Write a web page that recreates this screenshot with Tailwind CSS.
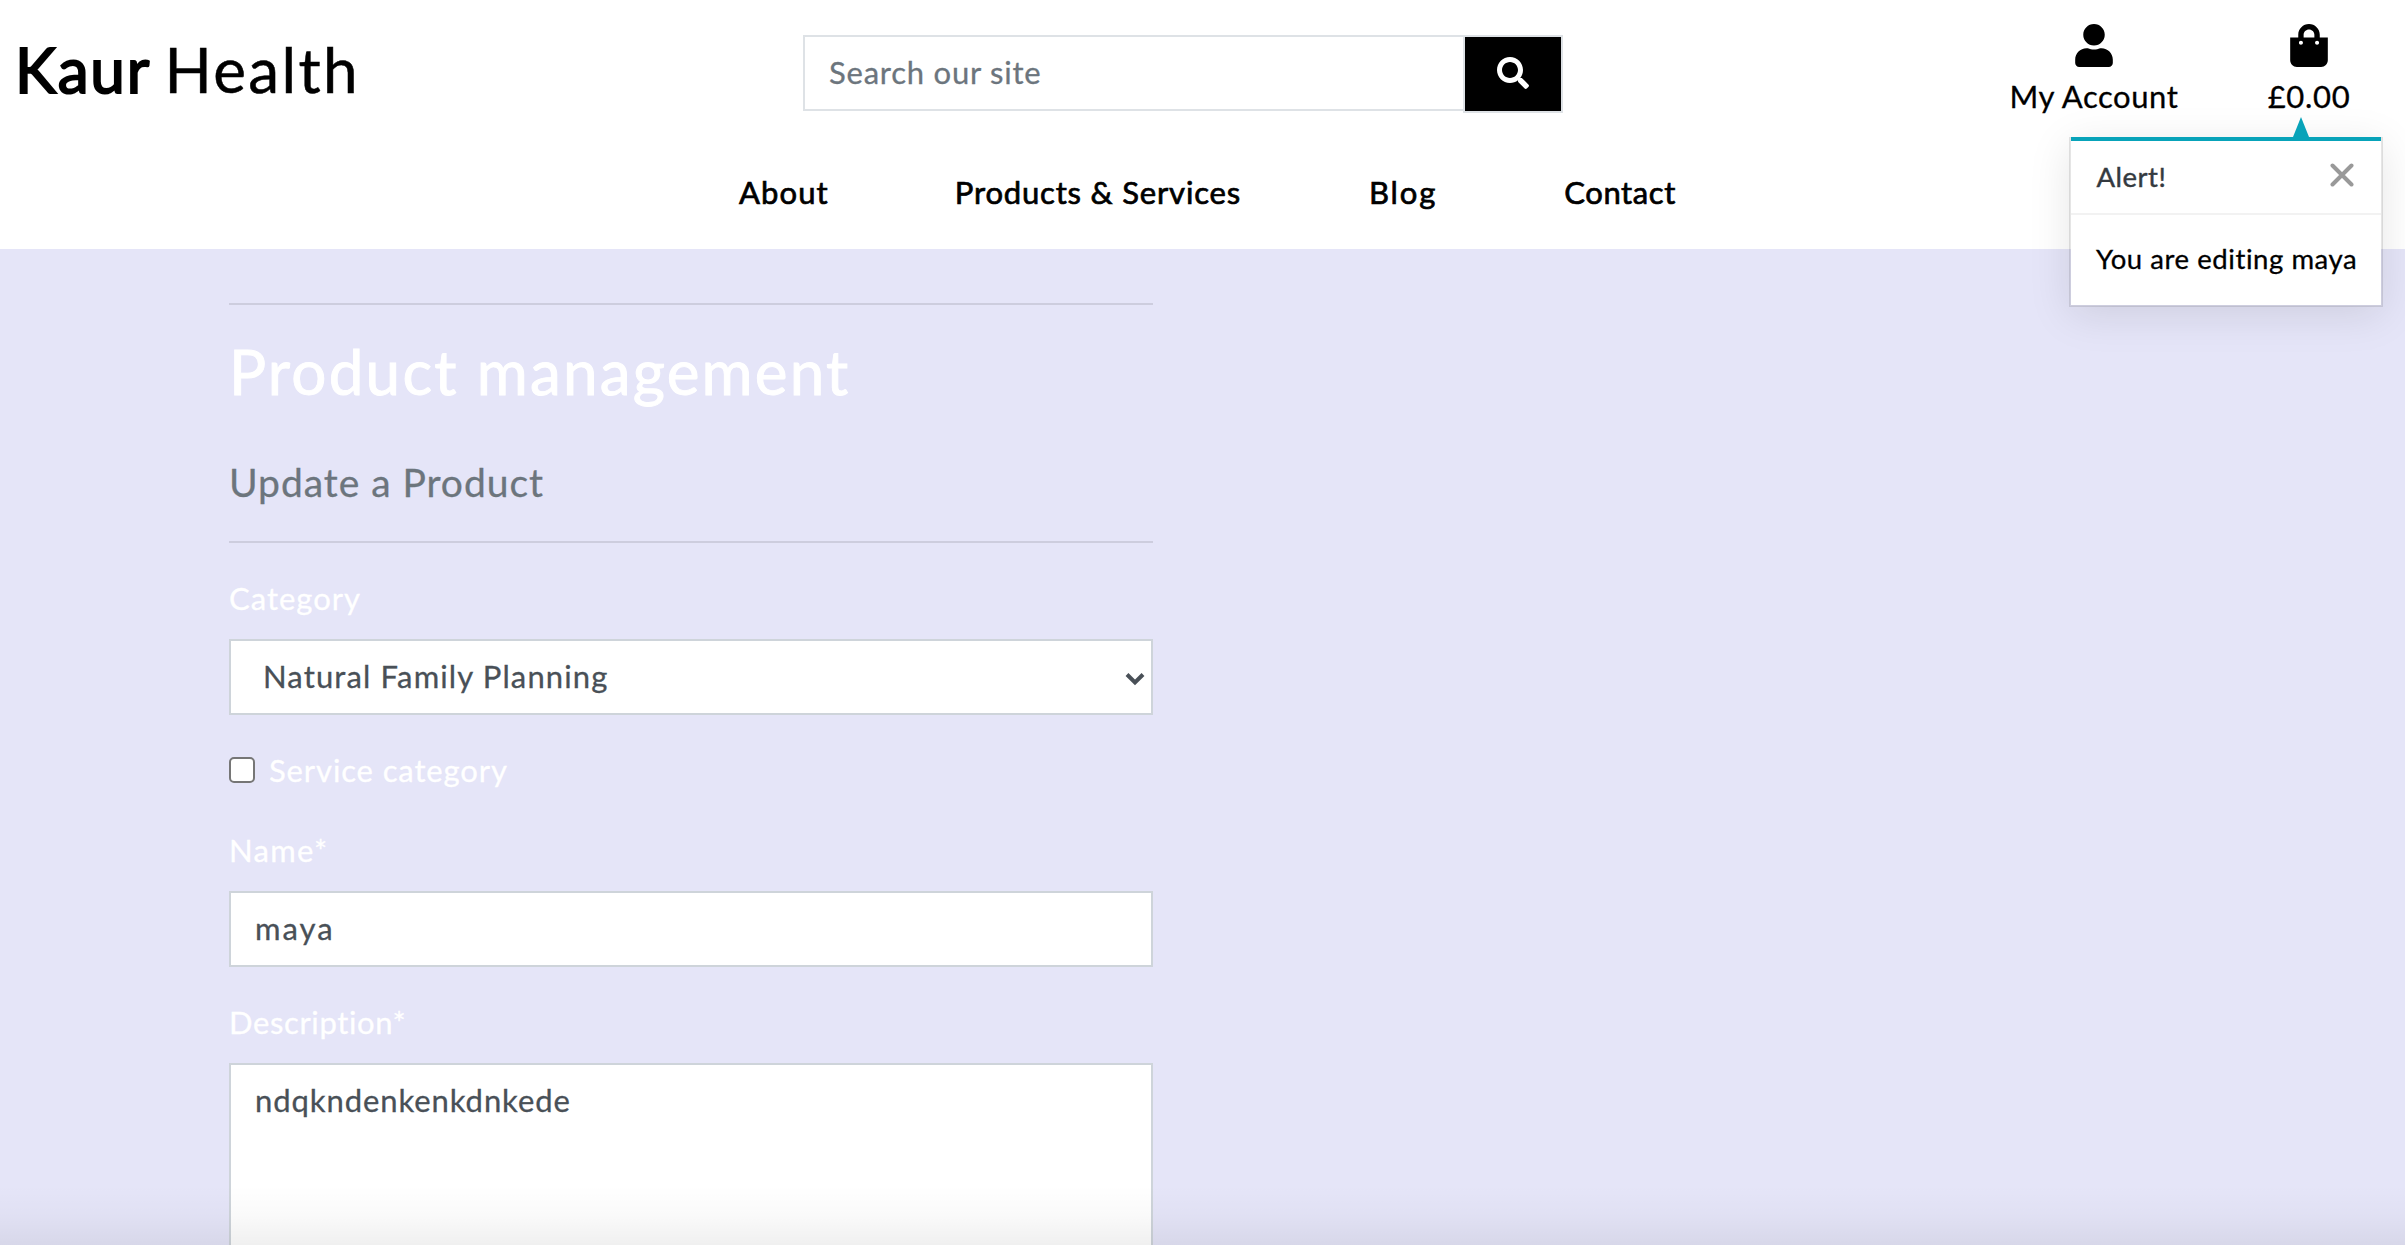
<!DOCTYPE html>
<html lang="en">
<head>
<meta charset="utf-8">
<title>Kaur Health</title>
<script src="https://cdn.jsdelivr.net/npm/@tailwindcss/browser@4"></script>
</head>
<body class="relative flex flex-col w-[2405px] h-[1245px] overflow-hidden bg-[#e5e5f8] font-['Lato',sans-serif] text-[31px] leading-[48px] text-black whitespace-nowrap">
  <header class="h-[249px] shrink-0 bg-white flex flex-col">
    <div class="flex h-[167px] items-start">
      <a class="flex w-[803px] pl-[15px] pt-[31px] text-[62px] leading-[76px]"><span class="w-[132px] tracking-[1.8px] [-webkit-text-stroke:2px_black]">Kaur</span><span class="ml-[17.5px] tracking-[2.34px] [-webkit-text-stroke:0.5px_black]">Health</span></a>
      <form class="flex w-[760px] pt-[35px]">
        <div class="w-[660px] h-[76px] border-2 border-r-0 border-[#dee2e6] pt-[11px] pl-[24px] text-[#6c757d] tracking-[0.77px] [-webkit-text-stroke:0.3px_#6c757d]">Search our site</div>
        <button type="button" class="w-[100px] h-[78px] border-2 border-[#dee2e6] bg-black flex items-center justify-center pb-[2px]">
          <svg class="size-8" viewBox="0 0 512 512" fill="#fff"><path d="M505 442.7L405.3 343c-4.500-4.500-10.600-7-17-7H372c27.600-35.300 44-79.700 44-128C416 93.100 322.900 0 208 0S0 93.100 0 208s93.100 208 208 208c48.300 0 92.700-16.400 128-44v16.300c0 6.400 2.500 12.500 7 17l99.700 99.700c9.400 9.400 24.600 9.400 33.900 0l28.300-28.300c9.400-9.400 9.400-24.600.1-34zM208 336c-70.700 0-128-57.200-128-128 0-70.700 57.200-128 128-128 70.700 0 128 57.200 128 128 0 70.700-57.200 128-128 128z"/></svg>
        </button>
      </form>
      <div class="flex pl-[445px] pt-[23.5px] gap-[87px]">
        <a class="flex flex-col items-center w-[172px]">
          <svg class="w-[38px] h-[43px] mb-[5px]" viewBox="0 0 448 512"><path d="M224 256c70.700 0 128-57.300 128-128S294.700 0 224 0 96 57.300 96 128s57.300 128 128 128zm89.600 32h-16.700c-22.200 10.200-46.900 16-72.900 16s-50.600-5.800-72.900-16h-16.700C60.200 288 0 348.200 0 422.400V464c0 26.500 21.500 48 48 48h352c26.500 0 48-21.500 48-48v-41.600c0-74.200-60.200-134.400-134.400-134.400z"/></svg>
          <span class="tracking-[0.57px] [-webkit-text-stroke:0.3px_black]">My Account</span>
        </a>
        <a class="flex flex-col items-center w-[84px]">
          <svg class="w-[38px] h-[43px] mb-[5px]" viewBox="0 0 448 512"><path d="M352 160v-32C352 57.420 294.579 0 224 0 153.420 0 96 57.420 96 128v32H0v272c0 44.183 35.817 80 80 80h288c44.183 0 80-35.817 80-80V160h-96zm-192-32c0-35.290 28.710-64 64-64s64 28.710 64 64v32H160v-32zm160 120c-13.255 0-24-10.745-24-24s10.745-24 24-24 24 10.745 24 24-10.745 24-24 24zm-192 0c-13.255 0-24-10.745-24-24s10.745-24 24-24 24 10.745 24 24-10.745 24-24 24z"/></svg>
          <span class="tracking-[0.69px] [-webkit-text-stroke:0.3px_black]">£0.00</span>
        </a>
      </div>
    </div>
    <nav class="flex pl-[739px] pt-px [-webkit-text-stroke:0.7px_black]">
      <a class="tracking-[1.1px]">About</a>
      <a class="ml-[126px] tracking-[0.82px]">Products &amp; Services</a>
      <a class="ml-[128px] tracking-[1.9px]">Blog</a>
      <a class="ml-[127px] tracking-[0.6px]">Contact</a>
    </nav>
  </header>

  <main class="ml-[229px] w-[924px] flex-1 min-h-0 flex flex-col pt-[54px] text-white [-webkit-text-stroke:0.3px]">
    <hr class="border-t-2 border-black/10">
    <h2 class="mt-7 text-[62px] leading-[76px] tracking-[2.2px] [-webkit-text-stroke:0.9px_white]">Product management</h2>
    <h5 class="mt-[49px] text-[39px] leading-[48px] tracking-[0.97px] text-[#6c757d]">Update a Product</h5>
    <hr class="mt-[35px] border-t-2 border-black/10">
    <label class="mt-[31px] tracking-[0.99px]">Category</label>
    <div class="mt-[17px] h-[76px] shrink-0 bg-white border-2 border-[#ced4da] pt-[11px] pl-[32px] pr-[6px] flex justify-between text-[#495057]">
      <span class="tracking-[1.14px]">Natural Family Planning</span>
      <svg class="mt-[19.5px] w-5 h-[14px]" viewBox="0 0 20 14" fill="none" stroke="#495057" stroke-width="4"><path d="M2 2.500l8 8 8-8"/></svg>
    </div>
    <div class="mt-[31px] flex">
      <span class="mt-[11px] size-[26px] rounded-[5px] border-2 border-[#767676] bg-white"></span>
      <label class="ml-[14px] tracking-[0.88px]">Service category</label>
    </div>
    <label class="mt-8 tracking-[1.3px]">Name*</label>
    <div class="mt-[17px] h-[76px] shrink-0 bg-white border-2 border-[#ced4da] pt-[11px] pl-[24px] text-[#495057] tracking-[2px]">maya</div>
    <label class="mt-[31px] tracking-[0.62px]">Description*</label>
    <div class="mt-[17px] flex-1 min-h-0 bg-white border-2 border-b-0 border-[#ced4da] pt-[11px] pl-[24px] text-[#495057] tracking-[0.92px]">ndqkndenkenkdnkede</div>
  </main>

  <div class="absolute inset-x-0 bottom-0 h-[60px] bg-linear-to-b from-black/0 via-black/2 to-black/6"></div>

  <div class="absolute left-[2069px] top-[137px] w-[314px] h-[170px] border-2 border-t-0 border-black/10 bg-white bg-clip-padding shadow-[0_8px_40px_rgba(0,0,0,0.1)] text-[27.5px] leading-[42px]">
    <svg class="absolute left-[222px] -top-5 w-4 h-5" viewBox="0 0 16 20"><path d="M8 0l8 20H0z" fill="#08a3b9"/></svg>
    <div class="h-1 bg-[#08a3b9]"></div>
    <div class="flex justify-between h-[74px] border-b-2 border-black/5 pl-[25.5px] pr-[27px] pt-[15px] text-[#343a40]">
      <span class="tracking-[0.51px] [-webkit-text-stroke:0.4px_#343a40]">Alert!</span>
      <svg class="mt-[7px] size-6" viewBox="0 0 24 24" stroke="#999" stroke-width="4" stroke-linecap="round"><path d="M2.500 2.500l19 19M21.500 2.500l-19 19"/></svg>
    </div>
    <p class="pl-[25px] pt-[23px] tracking-[0.56px] [-webkit-text-stroke:0.3px_black]">You are editing maya</p>
  </div>
</body>
</html>
